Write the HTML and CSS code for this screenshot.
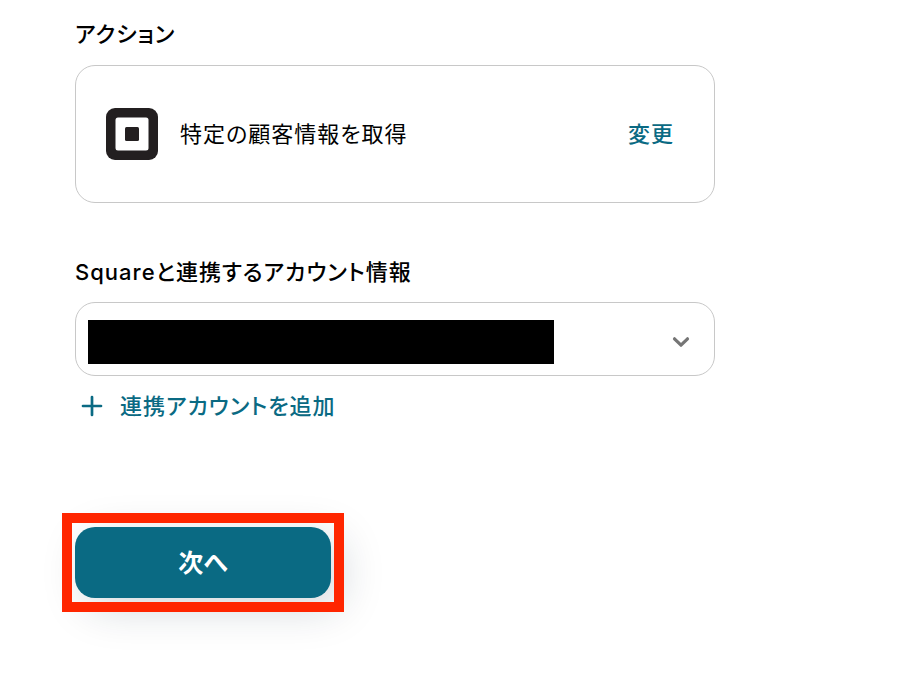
FILE: index.html
```
<!DOCTYPE html>
<html lang="ja">
<head>
    <meta charset="UTF-8">
    <meta name="viewport" content="width=device-width, initial-scale=1.0">
    <title>アクション</title>
    <link rel="stylesheet" href="styles.css">
</head>
<body>
    <form class="setup" action="">
        <h2 class="label">アクション</h2>
        <div class="action-card">
            <svg class="logo" viewBox="0 0 52 52" aria-hidden="true">
                <rect width="52" height="52" rx="9" fill="#231f20"/>
                <rect x="9.500" y="9.500" width="33" height="33" rx="2.500" fill="#fff"/>
                <rect x="19" y="19" width="14" height="14" rx="1.500" fill="#231f20"/>
            </svg>
            <span class="action-name">特定の顧客情報を取得</span>
            <button type="button" class="text-button">変更</button>
        </div>

        <label class="label" for="account">Squareと連携するアカウント情報</label>
        <div class="select-box">
            <select name="account" id="account">
                <option value="" selected></option>
            </select>
            <span class="mask"></span>
            <svg class="chevron" viewBox="0 0 20 20" aria-hidden="true">
                <path d="M3.500 6.800 L10 13.200 L16.500 6.800" fill="none" stroke="#757575" stroke-width="3.200" stroke-linecap="round" stroke-linejoin="round"/>
            </svg>
        </div>
        <button type="button" class="text-button add-button">
            <svg class="plus" viewBox="0 0 22 22" aria-hidden="true">
                <path d="M11 2 V20 M2 11 H20" fill="none" stroke="currentColor" stroke-width="2.700" stroke-linecap="round"/>
            </svg>
            連携アカウントを追加
        </button>

        <div class="next">
            <button type="submit" class="next-button">次へ</button>
        </div>
    </form>
</body>
</html>
```
FILE: styles.css
```
* {
    box-sizing: border-box;
}
body {
    margin: 0;
    background-color: #fff;
    color: #000;
    font-family: Inter, 'Noto Sans CJK JP', sans-serif;
    font-size: 22px;
    line-height: 32px;
    letter-spacing: 1px;
    font-feature-settings: "palt";
}
.setup {
    max-width: 790px;
    padding: 18px 75px 80px;
}
.label {
    display: block;
    margin: 0;
    font-size: 22px;
    font-weight: 500;
}
.action-card {
    display: flex;
    align-items: center;
    min-height: 138px;
    margin: 15px 0 53px;
    padding: 0 40px 0 30px;
    border: 1px solid #c8c8c8;
    border-radius: 20px;
}
.logo {
    width: 52px;
    height: 52px;
    margin-right: 22px;
}
.action-name {
    flex: 1;
}
.text-button {
    padding: 0;
    border: none;
    background: none;
    color: #0a6a83;
    font: inherit;
    font-weight: 500;
    letter-spacing: inherit;
    font-feature-settings: inherit;
    cursor: pointer;
}
.select-box {
    position: relative;
    margin: 14px 0;
}
select {
    display: block;
    width: 100%;
    height: 74px;
    padding: 0 60px 0 24px;
    border: 1px solid #c8c8c8;
    border-radius: 20px;
    background: #fff;
    color: #000;
    font: inherit;
    appearance: none;
}
.mask {
    position: absolute;
    top: 18px;
    bottom: 12px;
    left: 13px;
    width: 466px;
    background-color: #000;
    pointer-events: none;
}
.chevron {
    position: absolute;
    top: 30px;
    right: 24px;
    width: 20px;
    height: 20px;
    pointer-events: none;
}
.add-button {
    display: flex;
    align-items: center;
    gap: 17px;
    padding-left: 6px;
}
.plus {
    width: 22px;
    height: 22px;
}
.next {
    position: relative;
    width: 256px;
    margin-top: 105px;
}
.next-button {
    display: block;
    width: 100%;
    height: 71px;
    border: none;
    border-radius: 20px;
    background-color: #0a6a83;
    box-shadow: 10px 10px 44px rgba(10, 40, 55, 0.18);
    color: #fff;
    font: inherit;
    font-size: 25px;
    font-weight: 700;
    cursor: pointer;
}
/* highlight frame, drawn over the button shadow */
.next::after {
    content: "";
    position: absolute;
    inset: -14px -13px;
    border: 10px solid #ff2600;
    pointer-events: none;
}
```
